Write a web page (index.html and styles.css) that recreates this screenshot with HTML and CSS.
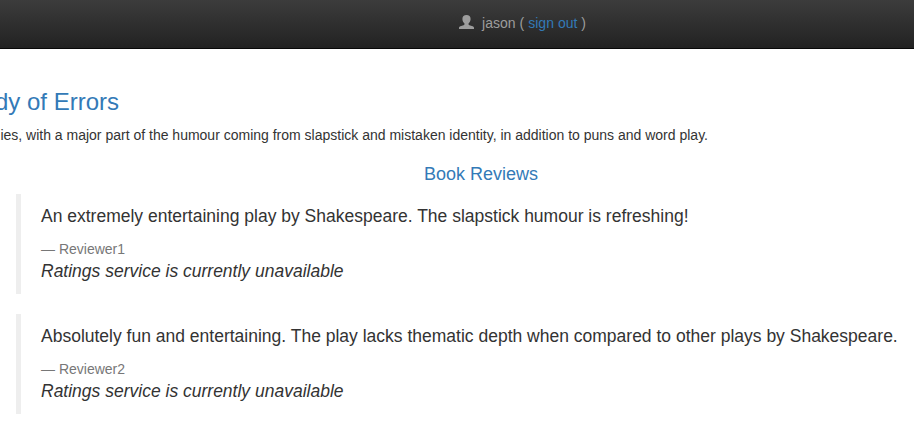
FILE: index.html
```html
<!DOCTYPE html>
<html lang="en">
<head>
<meta charset="utf-8">
<title>Simple Bookstore App</title>
<link rel="stylesheet" href="styles.css">
</head>
<body>
<nav class="navbar">
  <p class="navbar-text">
    <svg class="user-icon" viewBox="0 0 15 14" width="15" height="14" aria-hidden="true"><path d="M7.500 0C4.900 0 3.400 1.500 3.400 3.900C3.400 5.800 4.200 7.300 5.400 8.300V9.400C5.400 9.800 5 10 4.500 10.200L1.400 11.300C.5 11.700 0 12.100 0 13V14H15V13C15 12.100 14.500 11.700 13.600 11.300L10.500 10.200C10 10 9.600 9.800 9.600 9.400V8.300C10.800 7.300 11.600 5.800 11.600 3.900C11.600 1.500 10.100 0 7.500 0Z"/></svg>
    <span>jason ( <a href="#">sign out</a> )</span>
  </p>
</nav>
<main>
  <h3 class="title"><a href="#">The Comedy of Errors</a></h3>
  <p class="summary"><span>one of his shortest and most farcical comedies, with a major part of the humour coming from slapstick and mistaken identity, in addition to puns and word play.</span></p>
  <section class="reviews">
    <h4>Book Reviews</h4>
    <blockquote>
      <p>An extremely entertaining play by Shakespeare. The slapstick humour is refreshing!</p>
      <small>Reviewer1</small>
      <em>Ratings service is currently unavailable</em>
    </blockquote>
    <blockquote>
      <p>Absolutely fun and entertaining. The play lacks thematic depth when compared to other plays by Shakespeare.</p>
      <small>Reviewer2</small>
      <em>Ratings service is currently unavailable</em>
    </blockquote>
  </section>
</main>
</body>
</html>
```
FILE: styles.css
```css
* { box-sizing: border-box; }
body {
  margin: 0;
  height: 432px;
  overflow: hidden;
  background: #fff;
  color: #333;
  font: 14px/20px "Liberation Sans", Arial, sans-serif;
}
a { color: #337ab7; text-decoration: none; }
.navbar {
  height: 49px;
  padding: 13px 0 0 459px;
  border-bottom: 1px solid #080808;
  background: linear-gradient(#3c3c3c, #222);
}
.navbar-text { display: flex; gap: 8px; margin: 0; color: #9d9d9d; white-space: pre; }
.navbar-text span { letter-spacing: 0.03px; }
.user-icon { margin-top: 2px; fill: #9d9d9d; }
.title {
  display: flex;
  justify-content: flex-end;
  width: 119px;
  margin: 40px 0 10px;
  font-size: 24px;
  font-weight: 500;
  line-height: 26px;
  white-space: nowrap;
}
.summary {
  display: flex;
  justify-content: flex-end;
  width: 708px;
  margin: 0 0 10px;
  white-space: nowrap;
}
.reviews { margin-left: 16px; padding-top: 9px; width: 930px; }
h4 {
  margin: 0 0 10px;
  color: #337ab7;
  font-size: 18px;
  font-weight: 500;
  line-height: 20px;
  text-align: center;
}
blockquote {
  height: 100px;
  margin: 0 0 20px;
  padding: 10px 20px;
  border-left: 5px solid #eee;
  font-size: 17.5px;
  line-height: 25px;
}
blockquote p { margin: 0 0 10px; white-space: nowrap; }
small { display: block; color: #777; font-size: 14px; line-height: 20px; }
small::before { content: "\2014 \00A0"; }
em { display: block; }
```
